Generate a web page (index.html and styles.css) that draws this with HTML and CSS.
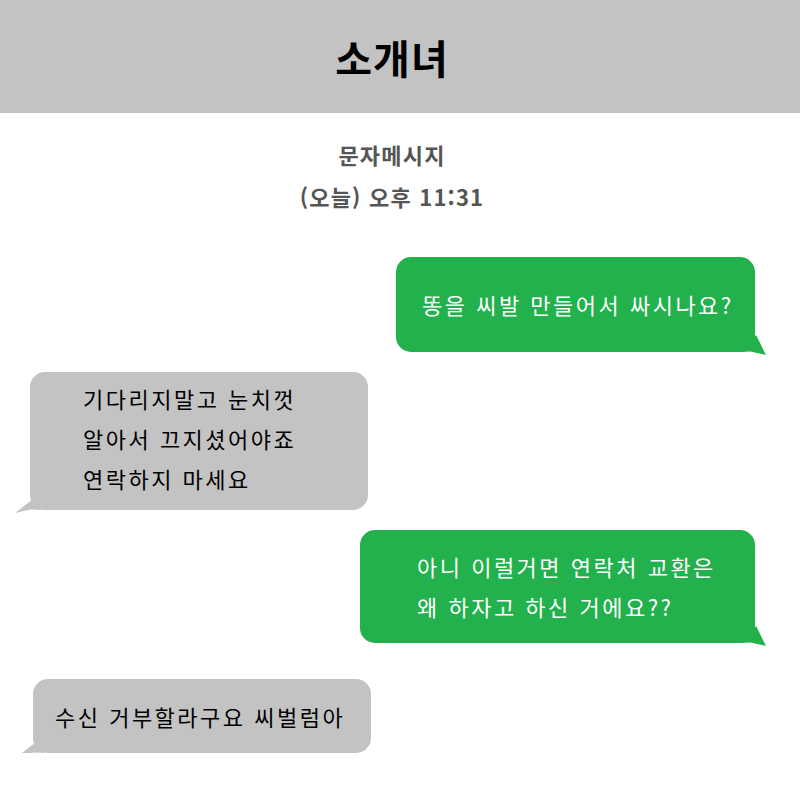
FILE: index.html
```html
<!DOCTYPE html>
<html lang="ko">
<head>
    <meta charset="UTF-8">
    <meta name="viewport" content="width=device-width, initial-scale=1.0">
    <title>소개녀</title>

    <link rel="stylesheet" href="styles.css">
</head>
<body>

    <header>
        <h1>소개녀</h1>
    </header>

    <div class="meta">
        <p>문자메시지</p>
        <p>(오늘) 오후 11:31</p>
    </div>

    <div class="chat">
        <div class="bubble sent first">
            <p>똥을 씨발 만들어서 싸시나요?</p>
        </div>

        <div class="bubble received second">
            <p>기다리지말고 눈치껏</p>
            <p>알아서 끄지셨어야죠</p>
            <p>연락하지 마세요</p>
        </div>

        <div class="bubble sent third">
            <p>아니 이럴거면 연락처 교환은</p>
            <p>왜 하자고 하신 거에요??</p>
        </div>

        <div class="bubble received fourth">
            <p>수신 거부할라구요 씨벌럼아</p>
        </div>
    </div>

</body>
</html>
```

FILE: styles.css
```css
body {
    font-family: 'Noto Sans CJK KR', 'Noto Sans', sans-serif;
    background-color: #fff;
    margin: 0;
    padding: 0;
}

header {
    background-color: #c3c3c3;
    height: 113px;
    display: flex;
    align-items: center;
    justify-content: center;
    padding-right: 16px;
}

h1 {
    margin: 0;
    font-size: 40px;
    font-weight: bold;
    letter-spacing: 1px;
    color: #000;
}

.meta {
    text-align: center;
    padding-top: 20px;
    padding-right: 16px;
    color: #555;
    font-weight: bold;
    font-size: 22px;
    letter-spacing: 1.2px;
}

.meta p {
    margin: 0;
    line-height: 42px;
}

.chat {
    display: flex;
    flex-direction: column;
    padding: 40px 45px 0 30px;
}

.bubble {
    position: relative;
    border-radius: 15px;
    font-size: 22px;
    letter-spacing: 2.5px;
    box-sizing: border-box;
}

.bubble p {
    margin: 0;
    line-height: 40px;
    white-space: nowrap;
}

.sent {
    align-self: flex-end;
    background-color: #22b14c;
    color: #fff;
}

.received {
    align-self: flex-start;
    background-color: #c3c3c3;
    color: #000;
}

.sent::after,
.received::after {
    content: "";
    position: absolute;
    bottom: -3px;
    width: 26px;
    height: 20px;
}

.sent::after {
    right: -11px;
    background-color: #22b14c;
    clip-path: polygon(0 85%, 62% 0, 100% 100%, 40% 82%);
}

.received::after {
    left: -15px;
    background-color: #c3c3c3;
    clip-path: polygon(100% 0, 100% 85%, 60% 82%, 0 100%);
}

.first {
    width: 359px;
    height: 95px;
    padding: 27px 10px 0 26px;
}

.second {
    width: 338px;
    height: 138px;
    padding: 6px 10px 0 53px;
    margin-top: 20px;
}

.third {
    width: 395px;
    height: 113px;
    padding: 16px 10px 0 57px;
    margin-top: 20px;
}

.fourth {
    width: 338px;
    height: 74px;
    padding: 17px 10px 0 22px;
    margin-top: 36px;
    margin-left: 3px;
}
```
